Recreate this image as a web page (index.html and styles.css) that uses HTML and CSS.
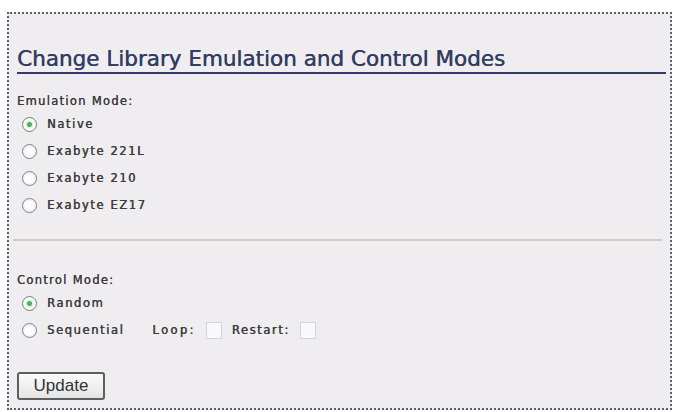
FILE: index.html
```html
<!DOCTYPE html>
<html lang="en">
<head>
    <meta charset="UTF-8">
    <title>Change Library Emulation and Control Modes</title>
    <link rel="stylesheet" href="styles.css">
</head>
<body>
    <form class="panel">
        <h1 class="panel-title">Change Library Emulation and Control Modes</h1>

        <div class="mode-group">
            <div class="group-label">Emulation Mode:</div>
            <label class="option"><input type="radio" name="emulation" checked> Native</label>
            <label class="option"><input type="radio" name="emulation"> Exabyte 221L</label>
            <label class="option"><input type="radio" name="emulation"> Exabyte 210</label>
            <label class="option"><input type="radio" name="emulation"> Exabyte EZ17</label>
        </div>

        <hr class="divider">

        <div class="mode-group">
            <div class="group-label">Control Mode:</div>
            <label class="option"><input type="radio" name="control" checked> Random</label>
            <div class="option-row">
                <label class="option"><input type="radio" name="control"> Sequential</label>
                <label class="check check-loop">Loop: <input type="checkbox"></label>
                <label class="check">Restart: <input type="checkbox"></label>
            </div>
        </div>

        <button type="button" class="update-btn">Update</button>
    </form>
</body>
</html>
```

FILE: styles.css
```css
body {
    margin: 0;
    background-color: #fff;
    font-family: "DejaVu Sans", Verdana, sans-serif;
    color: #3a3a3a;
}

.panel {
    display: flex;
    flex-direction: column;
    height: 398px;
    margin: 12px 1px 0 7px;
    padding: 0 4px 0 8px;
    border: 2px dotted #5a5f6e;
    background-color: #efedef;
    box-sizing: border-box;
}

.panel-title {
    margin: 32px 0 0 0;
    padding-bottom: 0;
    font-size: 21.5px;
    font-weight: normal;
    color: #323d62;
    text-shadow: 0.4px 0 0 #323d62;
    border-bottom: 2px solid #2f3a6b;
    line-height: 26px;
}

.mode-group {
    display: flex;
    flex-direction: column;
    gap: 9px;
    margin-top: 20px;
}

.group-label {
    font-size: 11.5px;
    letter-spacing: 1.3px;
    margin-bottom: -2px;
    color: #3a3a3a;
    text-shadow: 0.2px 0 0 #3a3a3a;
}

.option, .check {
    display: flex;
    align-items: center;
    font-size: 11.5px;
    letter-spacing: 1.6px;
    color: #3c3c3c;
    text-shadow: 0.4px 0 0 #3c3c3c;
    height: 18px;
}

.option input[type="radio"] {
    appearance: none;
    width: 15px;
    height: 15px;
    margin: 0 10px 0 5px;
    border: 1.5px solid #7c8491;
    border-radius: 50%;
    background: radial-gradient(circle, #fdfdfd 40%, #e2e4e6 100%);
    box-sizing: border-box;
}

.option input[type="radio"]:checked {
    background: radial-gradient(circle, #4fae5a 0 2px, #dcefdc 3px, #fdfdfd 5px, #e2e4e6 100%);
    border-color: #6a8a70;
}

.option-row {
    display: flex;
    align-items: center;
    gap: 10px;
}

.check-loop {
    margin-left: 18px;
    letter-spacing: 2.4px;
}

.check input[type="checkbox"] {
    appearance: none;
    width: 16px;
    height: 17px;
    margin: 0 0 0 10px;
    border: 1px solid #d4d4d8;
    background-color: #f9f9fb;
}

.divider {
    width: 100%;
    margin: 25px 0 12px -4px;
    border: none;
    border-top: 2px solid #cdc9c4;
}

.update-btn {
    align-self: flex-start;
    margin-top: 33px;
    width: 88px;
    height: 28px;
    font-family: "Liberation Sans", Arial, sans-serif;
    font-size: 17px;
    color: #333;
    background: linear-gradient(#fbfbfb, #e4e4e4);
    border: 2px solid #5e5e5e;
    border-radius: 3px;
}
```
